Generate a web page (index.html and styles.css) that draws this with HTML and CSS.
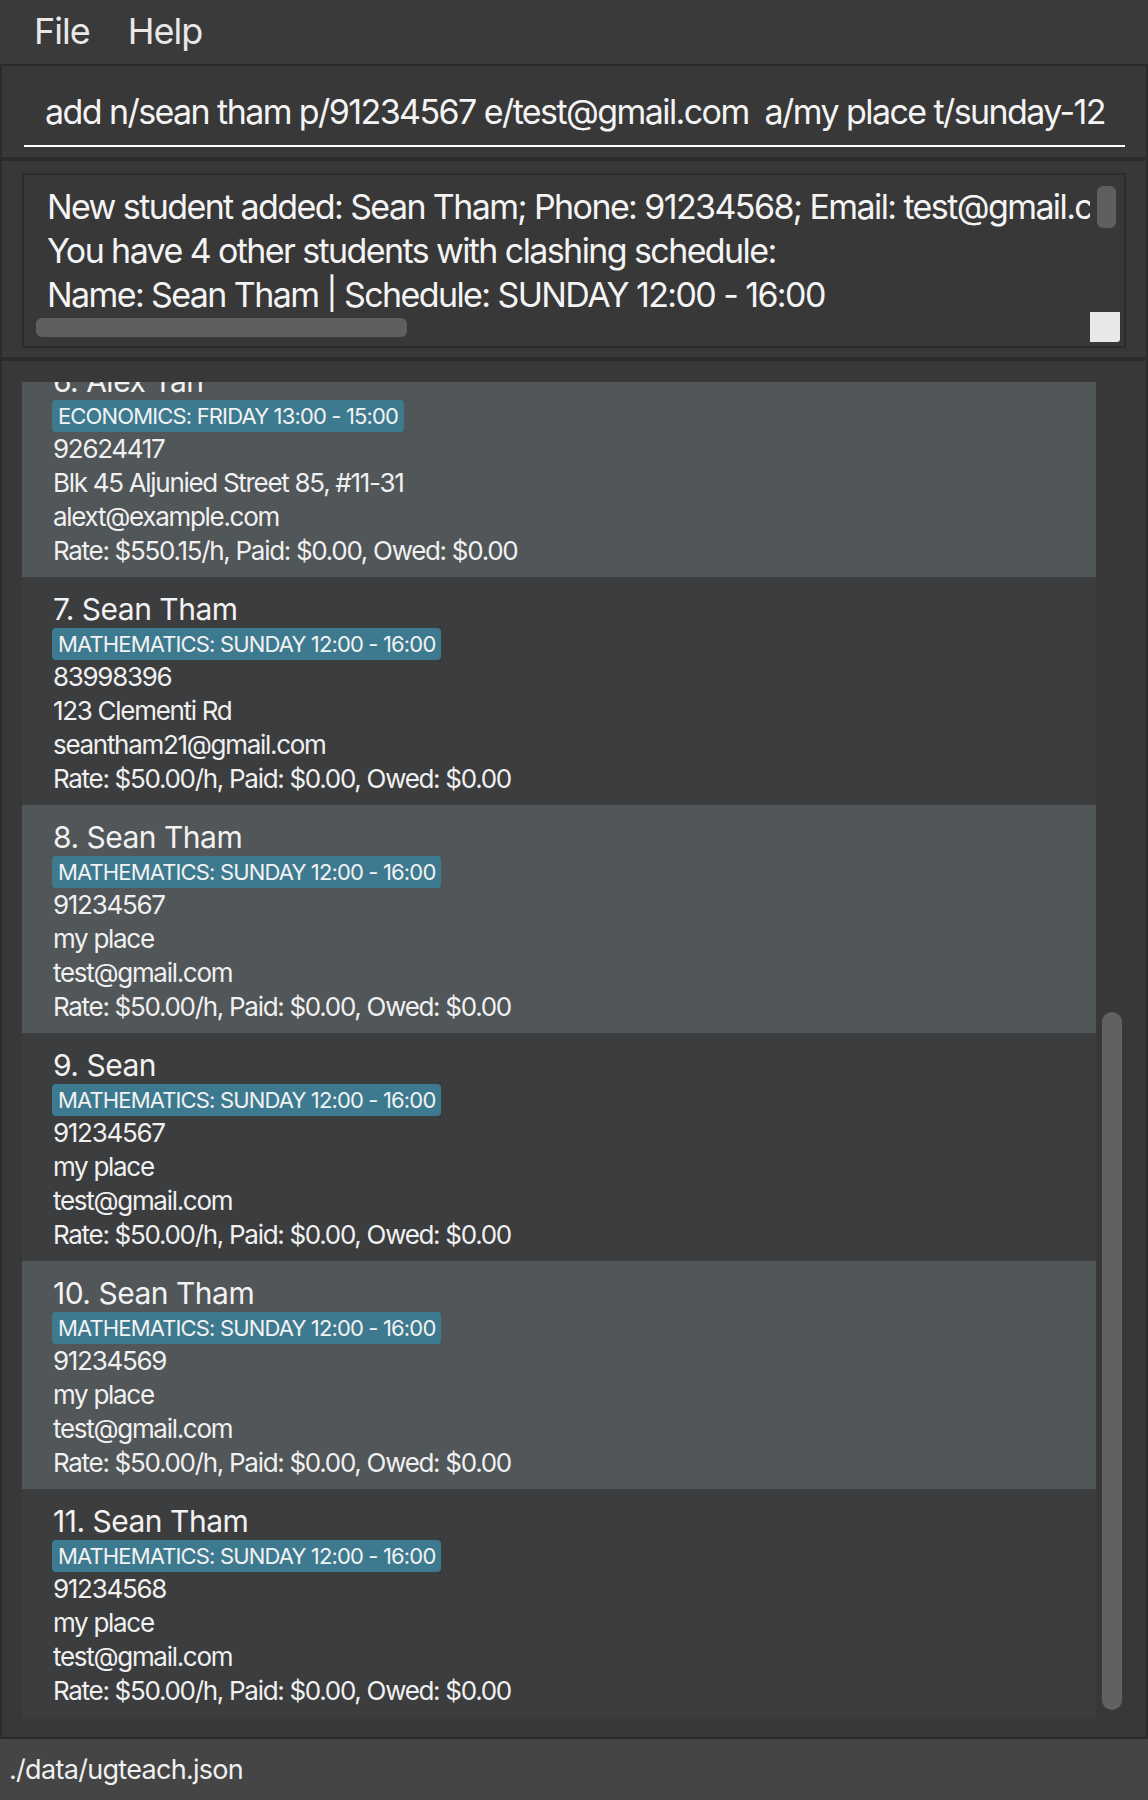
FILE: index.html
```html
<!DOCTYPE html>
<html>
<head>
<meta charset="utf-8">
<link rel="stylesheet" href="styles.css">
</head>
<body>
<div class="app">
  <div class="menubar">
    <span class="menu-item">File</span>
    <span class="menu-item">Help</span>
  </div>
  <div class="panels">
    <div class="panel command-panel">
      <div class="command-field">add n/sean tham p/91234567 e/test@gmail.com  a/my place t/sunday-12</div>
    </div>
    <div class="panel result-panel">
      <div class="result-box">
        <div class="result-text">
          <div class="result-line">New student added: Sean Tham; Phone: 91234568; Email: test@gmail.com; Address: my place; Schedule: SUNDAY 12:00 - 16:00</div>
          <div class="result-line">You have 4 other students with clashing schedule:</div>
          <div class="result-line">Name: Sean Tham | Schedule: SUNDAY 12:00 - 16:00</div>
        </div>
        <div class="vscroll"><div class="vthumb"></div></div>
        <div class="hscroll"><div class="hthumb"></div></div>
        <div class="corner"></div>
      </div>
    </div>
    <div class="panel list-panel">
      <div class="list-viewport">
        <div class="list-inner">
          <div class="card light">
            <div class="name">6. Alex Tan</div>
            <div class="tags"><span class="tag">ECONOMICS: FRIDAY 13:00 - 15:00</span></div>
            <div class="detail">92624417</div>
            <div class="detail">Blk 45 Aljunied Street 85, #11-31</div>
            <div class="detail">alext@example.com</div>
            <div class="detail">Rate: $550.15/h, Paid: $0.00, Owed: $0.00</div>
          </div>
          <div class="card dark">
            <div class="name">7. Sean Tham</div>
            <div class="tags"><span class="tag">MATHEMATICS: SUNDAY 12:00 - 16:00</span></div>
            <div class="detail">83998396</div>
            <div class="detail">123 Clementi Rd</div>
            <div class="detail">seantham21@gmail.com</div>
            <div class="detail">Rate: $50.00/h, Paid: $0.00, Owed: $0.00</div>
          </div>
          <div class="card light">
            <div class="name">8. Sean Tham</div>
            <div class="tags"><span class="tag">MATHEMATICS: SUNDAY 12:00 - 16:00</span></div>
            <div class="detail">91234567</div>
            <div class="detail">my place</div>
            <div class="detail">test@gmail.com</div>
            <div class="detail">Rate: $50.00/h, Paid: $0.00, Owed: $0.00</div>
          </div>
          <div class="card dark">
            <div class="name">9. Sean</div>
            <div class="tags"><span class="tag">MATHEMATICS: SUNDAY 12:00 - 16:00</span></div>
            <div class="detail">91234567</div>
            <div class="detail">my place</div>
            <div class="detail">test@gmail.com</div>
            <div class="detail">Rate: $50.00/h, Paid: $0.00, Owed: $0.00</div>
          </div>
          <div class="card light">
            <div class="name">10. Sean Tham</div>
            <div class="tags"><span class="tag">MATHEMATICS: SUNDAY 12:00 - 16:00</span></div>
            <div class="detail">91234569</div>
            <div class="detail">my place</div>
            <div class="detail">test@gmail.com</div>
            <div class="detail">Rate: $50.00/h, Paid: $0.00, Owed: $0.00</div>
          </div>
          <div class="card dark">
            <div class="name">11. Sean Tham</div>
            <div class="tags"><span class="tag">MATHEMATICS: SUNDAY 12:00 - 16:00</span></div>
            <div class="detail">91234568</div>
            <div class="detail">my place</div>
            <div class="detail">test@gmail.com</div>
            <div class="detail">Rate: $50.00/h, Paid: $0.00, Owed: $0.00</div>
          </div>
        </div>
      </div>
      <div class="list-scroll"><div class="list-thumb"></div></div>
    </div>
  </div>
  <div class="statusbar">./data/ugteach.json</div>
</div>
</body>
</html>
```
FILE: styles.css
```css
* { box-sizing: border-box; }
html, body { margin: 0; padding: 0; }
body {
  background: #383838;
  font-family: Inter, "Noto Sans", sans-serif;
  color: #f2f2f2;
}
.app {
  width: 1148px;
  height: 1800px;
  display: flex;
  flex-direction: column;
  overflow: hidden;
}
.menubar {
  height: 66px;
  flex: none;
  background: #3a3a3a;
  border-bottom: 2px solid #2b2b2b;
  display: flex;
  align-items: center;
  gap: 38px;
  padding-left: 34px;
  padding-bottom: 2px;
}
.menu-item {
  font-size: 36px;
  letter-spacing: -1px;
  color: #e8e8e8;
}
.panels {
  flex: 1;
  display: flex;
  flex-direction: column;
  gap: 4px;
  background: #2b2b2b;
  padding: 0 2px 2px 2px;
}
.panel { background: #383838; }
.command-panel {
  height: 91px;
  flex: none;
  padding: 19px 21px 0 22px;
}
.command-field {
  height: 62px;
  border-bottom: 2px solid #ffffff;
  font-size: 34px;
  line-height: 44px;
  padding-top: 5px;
  padding-left: 21px;
  white-space: pre;
  letter-spacing: -1.58px;
  color: #f4f4f4;
  overflow: hidden;
}
.result-panel {
  height: 196px;
  flex: none;
  padding: 12px 20px 0 20px;
}
.result-box {
  height: 175px;
  border: 2px solid #2c2c2c;
  display: grid;
  grid-template-columns: 1fr 34px;
  grid-template-rows: 1fr 34px;
}
.result-text {
  overflow: hidden;
  padding: 10px 0 0 23px;
  font-size: 34px;
  line-height: 44px;
  letter-spacing: -1.6px;
  white-space: nowrap;
  color: #f4f4f4;
}
.vscroll { padding: 11px 0 0 7px; }
.vthumb {
  width: 19px;
  height: 42px;
  background: #5f5f5f;
  border-radius: 6px;
}
.hscroll { padding: 6px 0 0 12px; }
.hthumb {
  width: 371px;
  height: 19px;
  background: #5f5f5f;
  border-radius: 6px;
}
.corner {
  margin: 0 4px 4px 0;
  background: #e8e8e8;
  border-radius: 0 0 3px 0;
}
.list-panel {
  flex: 1;
  display: flex;
  padding: 21px 0 19px 20px;
}
.list-viewport {
  width: 1074px;
  overflow: hidden;
}
.list-inner { margin-top: -33px; }
.card {
  height: 228px;
  padding: 14px 0 0 31px;
}
.card.light { background: #515659; }
.card.dark { background: #3c3d3f; }
.name {
  font-size: 30px;
  line-height: 36px;
  letter-spacing: -0.5px;
  color: #f2f2f2;
}
.tags {
  margin-top: 1px;
  height: 32px;
  display: flex;
  align-items: center;
}
.tag {
  background: #3e7a8f;
  border-radius: 4px;
  height: 32px;
  line-height: 32px;
  padding: 0 6px;
  font-size: 22px;
  letter-spacing: -0.85px;
  color: #f2f2f2;
  margin-left: -1px;
}
.detail {
  font-size: 26px;
  line-height: 34px;
  letter-spacing: -1.3px;
  color: #f0f0f0;
}
.list-scroll {
  width: 50px;
  padding: 630px 0 0 6px;
}
.list-thumb {
  width: 20px;
  height: 698px;
  background: #616161;
  border-radius: 10px;
}
.statusbar {
  height: 61px;
  flex: none;
  background: #454545;
  font-size: 27px;
  line-height: 61px;
  padding-left: 9px;
  letter-spacing: -0.7px;
  color: #f0f0f0;
}
```
